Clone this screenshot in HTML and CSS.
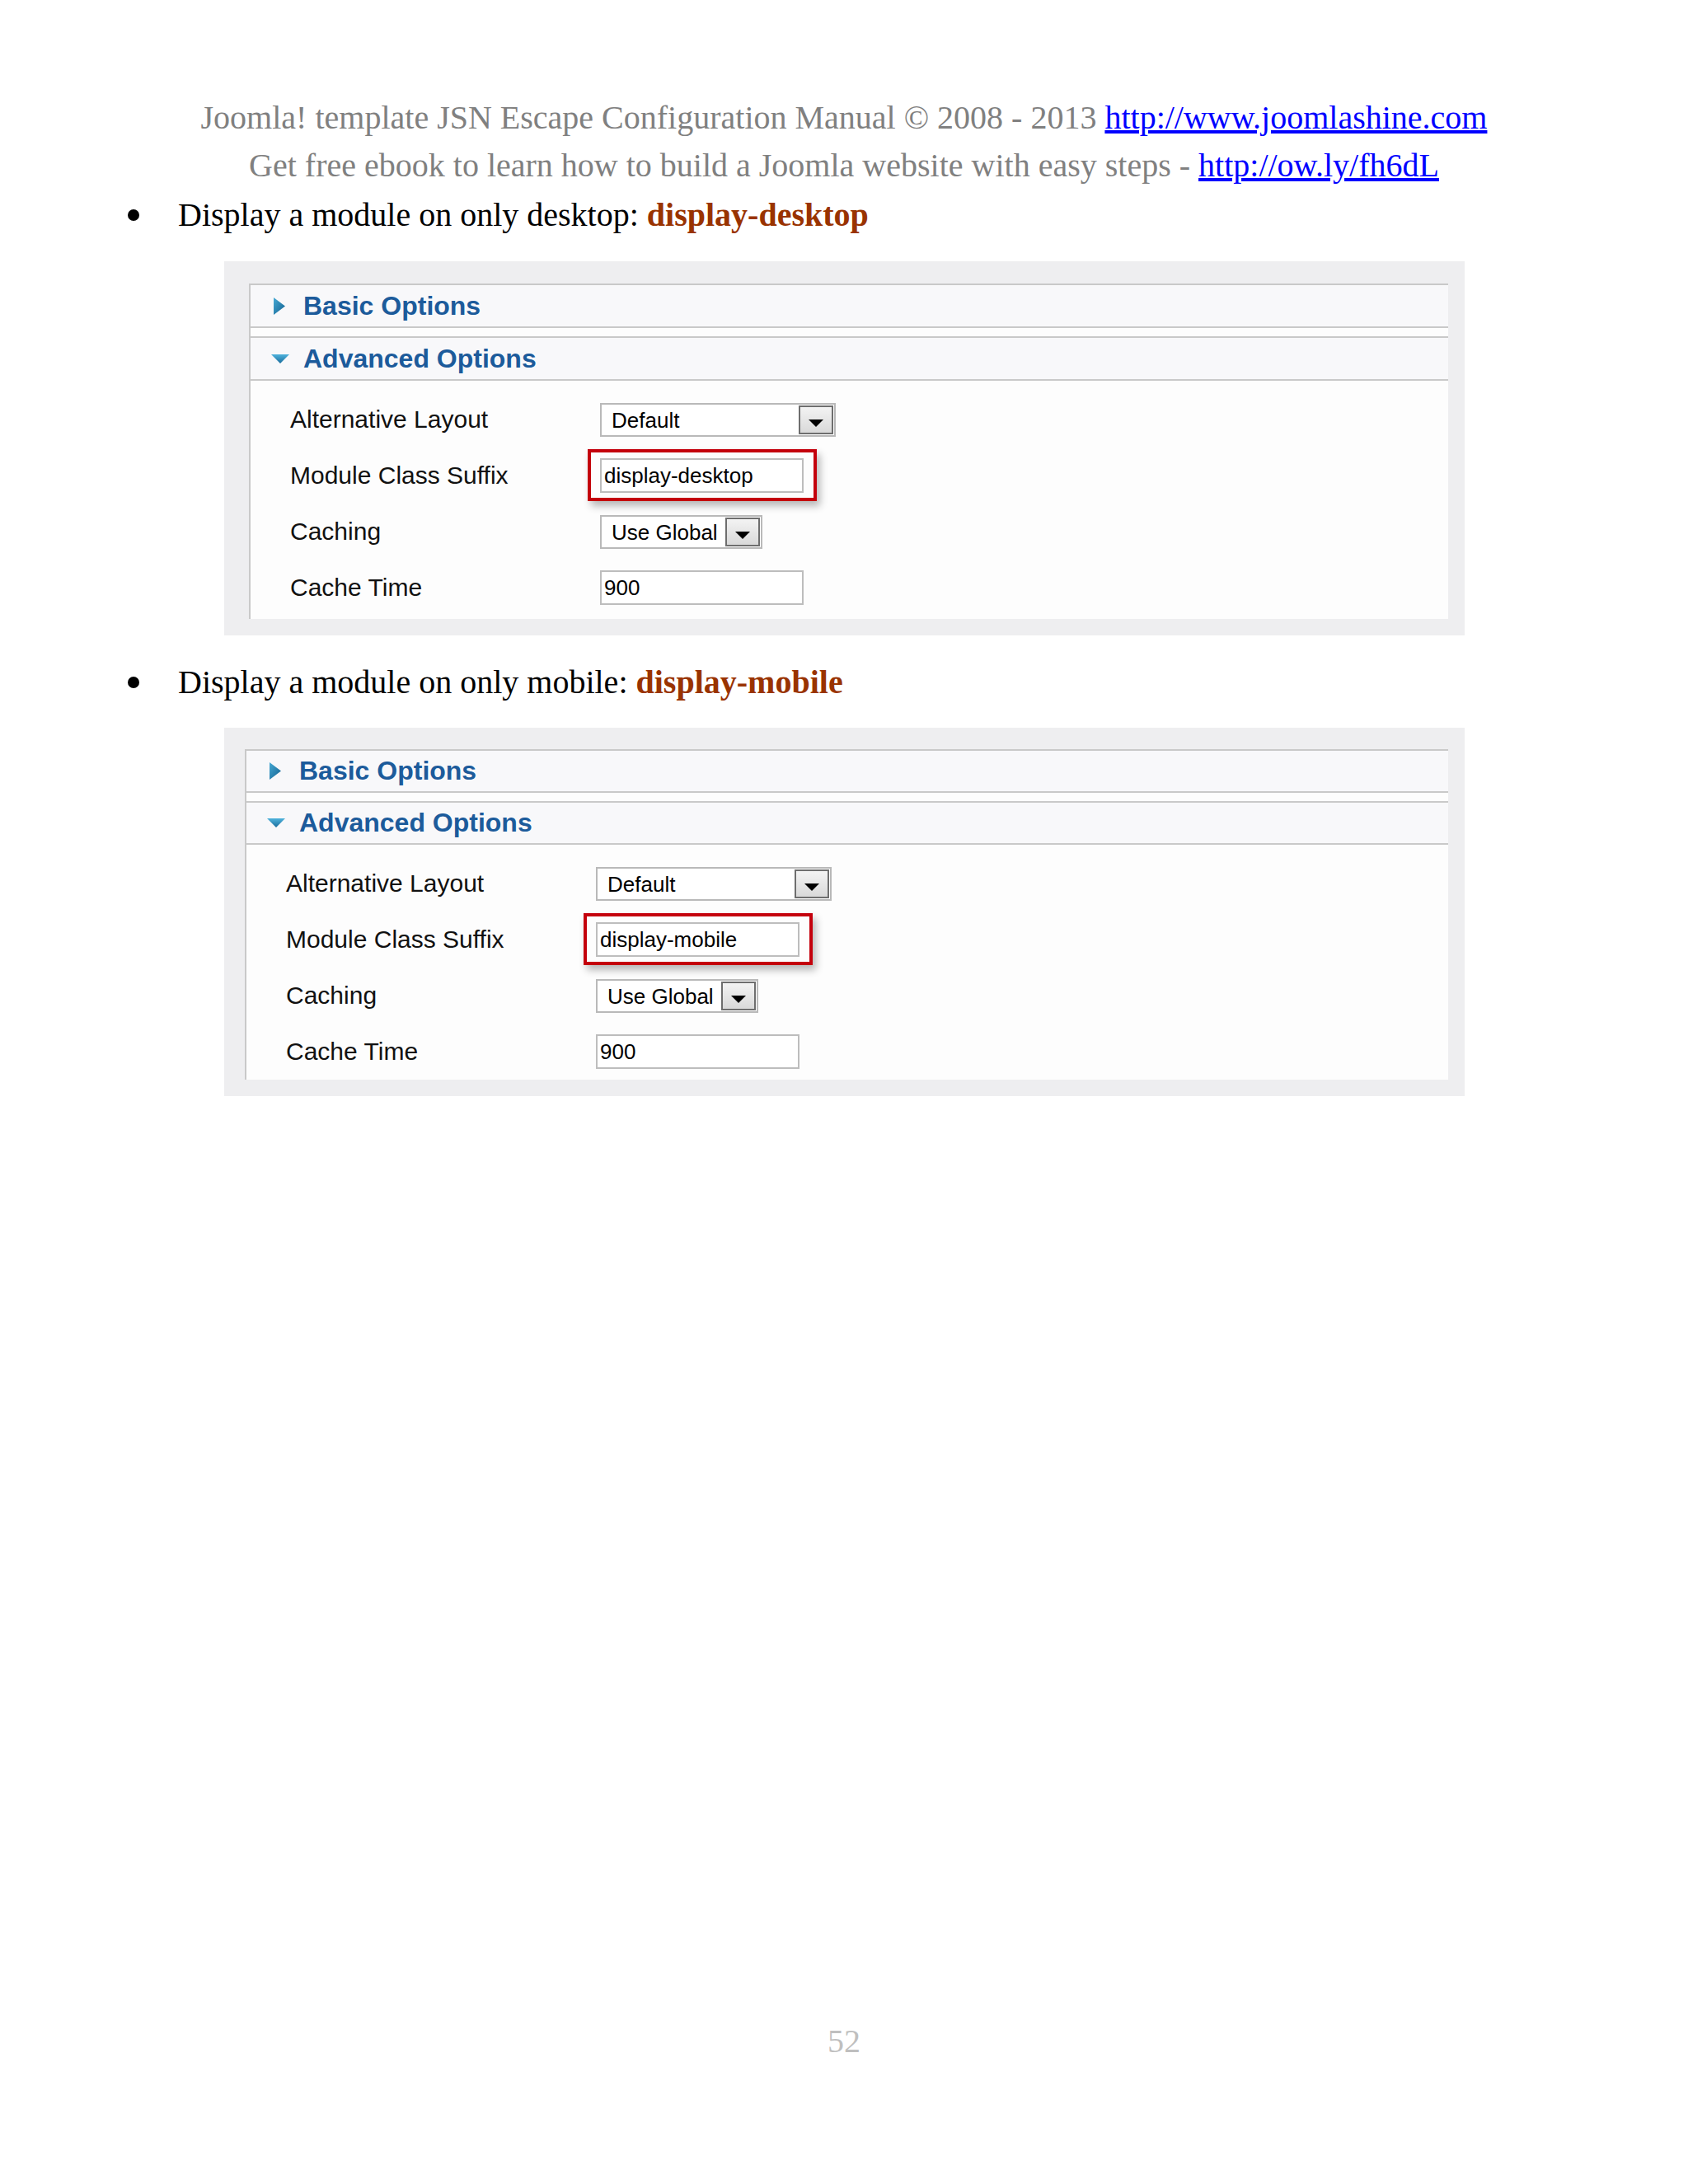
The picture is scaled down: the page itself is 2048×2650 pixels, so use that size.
FILE: index.html
```html
<!DOCTYPE html>
<html lang="en">

<head>
    <meta charset="UTF-8">
    <title>JSN Escape Configuration Manual - 52</title>
    <link rel="stylesheet" href="styles.css">
</head>

<body>
    <div class="page">
        <div class="running-head">
            <p>Joomla! template JSN Escape Configuration Manual © 2008 - 2013 <a href="#">http://www.joomlashine.com</a></p>
            <p>Get free ebook to learn how to build a Joomla website with easy steps - <a href="#">http://ow.ly/fh6dL</a></p>
        </div>

        <p class="bullet"><span class="dot"></span>Display a module on only desktop: <strong>display-desktop</strong></p>

        <div class="shot">
            <div class="panel">
                <div class="pane-head">
                    <svg class="arrow" width="22" height="21" viewBox="0 0 22 21">
                        <defs>
                            <linearGradient id="g1" x1="0" y1="0" x2="1" y2="1">
                                <stop offset="0" stop-color="#46a9d4" />
                                <stop offset="1" stop-color="#12608f" />
                            </linearGradient>
                        </defs>
                        <polygon points="3,0 17,10.5 3,21" fill="url(#g1)" />
                    </svg>
                    <span>Basic Options</span>
                </div>
                <div class="pane-head">
                    <svg class="arrow" width="22" height="21" viewBox="0 0 22 21">
                        <defs>
                            <linearGradient id="g2" x1="0" y1="0" x2="0" y2="1">
                                <stop offset="0" stop-color="#4fb3dc" />
                                <stop offset="1" stop-color="#1a6c9c" />
                            </linearGradient>
                        </defs>
                        <polygon points="0,5 22,5 11,16" fill="url(#g2)" />
                    </svg>
                    <span>Advanced Options</span>
                </div>
                <div class="pane-body">
                    <div class="row">
                        <label>Alternative Layout</label>
                        <div class="select"><span>Default</span><i class="select-btn"></i></div>
                    </div>
                    <div class="row">
                        <label>Module Class Suffix</label>
                        <div class="field mark">display-desktop</div>
                    </div>
                    <div class="row">
                        <label>Caching</label>
                        <div class="select short"><span>Use Global</span><i class="select-btn"></i></div>
                    </div>
                    <div class="row">
                        <label>Cache Time</label>
                        <div class="field">900</div>
                    </div>
                </div>
            </div>
        </div>

        <p class="bullet"><span class="dot"></span>Display a module on only mobile: <strong>display-mobile</strong></p>

        <div class="shot compact">
            <div class="panel">
                <div class="pane-head">
                    <svg class="arrow" width="22" height="21" viewBox="0 0 22 21">
                        <defs>
                            <linearGradient id="g3" x1="0" y1="0" x2="1" y2="1">
                                <stop offset="0" stop-color="#46a9d4" />
                                <stop offset="1" stop-color="#12608f" />
                            </linearGradient>
                        </defs>
                        <polygon points="3,0 17,10.5 3,21" fill="url(#g3)" />
                    </svg>
                    <span>Basic Options</span>
                </div>
                <div class="pane-head">
                    <svg class="arrow" width="22" height="21" viewBox="0 0 22 21">
                        <defs>
                            <linearGradient id="g4" x1="0" y1="0" x2="0" y2="1">
                                <stop offset="0" stop-color="#4fb3dc" />
                                <stop offset="1" stop-color="#1a6c9c" />
                            </linearGradient>
                        </defs>
                        <polygon points="0,5 22,5 11,16" fill="url(#g4)" />
                    </svg>
                    <span>Advanced Options</span>
                </div>
                <div class="pane-body">
                    <div class="row">
                        <label>Alternative Layout</label>
                        <div class="select"><span>Default</span><i class="select-btn"></i></div>
                    </div>
                    <div class="row">
                        <label>Module Class Suffix</label>
                        <div class="field mark">display-mobile</div>
                    </div>
                    <div class="row">
                        <label>Caching</label>
                        <div class="select short"><span>Use Global</span><i class="select-btn"></i></div>
                    </div>
                    <div class="row">
                        <label>Cache Time</label>
                        <div class="field">900</div>
                    </div>
                </div>
            </div>
        </div>

        <div class="folio">52</div>
    </div>
</body>

</html>
```

FILE: styles.css
```css
* {
    margin: 0;
    padding: 0;
    box-sizing: border-box;
}

body {
    background-color: #fff;
    font-family: 'Liberation Serif', 'Times New Roman', serif;
}

.page {
    width: 2048px;
    min-height: 2650px;
    padding: 114px 0 144px;
    display: flex;
    flex-direction: column;
}

/* page header */
.running-head {
    text-align: center;
    color: #808080;
    font-size: 40px;
    line-height: 58px;
}

.running-head a {
    color: #0000ff;
}

.bullet {
    margin-top: 28px;
    padding-left: 155px;
    font-size: 40px;
    line-height: 58px;
    color: #000;
}

.running-head + .bullet {
    margin-top: 2px;
}

.bullet .dot {
    display: inline-block;
    width: 14px;
    height: 14px;
    border-radius: 50%;
    background-color: #000;
    vertical-align: 6px;
    margin-right: 47px;
}

.bullet strong {
    color: #993300;
}

/* screenshot of the module params */
.shot {
    margin: 27px 0 0 272px;
    width: 1505px;
    padding: 27px 20px 20px 30px;
    background-color: #eeeef0;
    font-family: 'Liberation Sans', Arial, sans-serif;
}

.shot.compact {
    margin-top: 26px;
    padding-top: 26px;
    padding-left: 25px;
}

.panel {
    background-color: #fdfdfd;
    border-left: 2px solid #c9c9c9;
}

.pane-head {
    display: flex;
    align-items: center;
    height: 54px;
    padding-left: 25px;
    border-top: 2px solid #c9c9c9;
    border-bottom: 2px solid #c9c9c9;
    background-color: #f8f8fa;
    color: #1c5b9b;
    font-size: 32px;
    font-weight: bold;
}

.compact .pane-head {
    height: 53px;
}

.pane-head + .pane-head {
    margin-top: 10px;
}

.pane-head .arrow {
    flex: none;
    margin-right: 17px;
}

.pane-body {
    padding: 13px 0 4px 48px;
}

.compact .pane-body {
    padding-bottom: 0;
}

.row {
    display: flex;
    align-items: center;
    height: 68px;
}

.row label {
    width: 376px;
    color: #111;
    font-size: 30px;
}

.select {
    display: flex;
    width: 286px;
    height: 41px;
    border: 2px solid #b9b9b9;
    background-color: #fff;
    color: #000;
    font-size: 26px;
}

.select.short {
    width: 197px;
}

.select span {
    flex: 1;
    padding-left: 12px;
    line-height: 38px;
}

.select-btn {
    width: 42px;
    margin: 1px;
    display: flex;
    align-items: flex-end;
    justify-content: center;
    padding-bottom: 7px;
    border: 2px solid #6e6e6e;
    background: linear-gradient(#f3f3f3, #d9d9d9);
}

.select-btn::after {
    content: "";
    border-left: 9px solid transparent;
    border-right: 9px solid transparent;
    border-top: 9px solid #000;
}

.field {
    width: 247px;
    height: 42px;
    padding-left: 3px;
    border: 2px solid #bdbdbd;
    background-color: #fff;
    color: #000;
    font-size: 26px;
    line-height: 38px;
}

/* red annotation drawn over the screenshot */
.mark {
    position: relative;
}

.mark::after {
    content: "";
    position: absolute;
    top: -13px;
    left: -17px;
    right: -18px;
    bottom: -12px;
    border: 4px solid #c4000c;
    box-shadow: 4px 6px 9px rgba(0, 0, 0, 0.28);
}

.folio {
    margin-top: auto;
    text-align: center;
    color: #bfbfbf;
    font-size: 40px;
    line-height: 58px;
}
```
